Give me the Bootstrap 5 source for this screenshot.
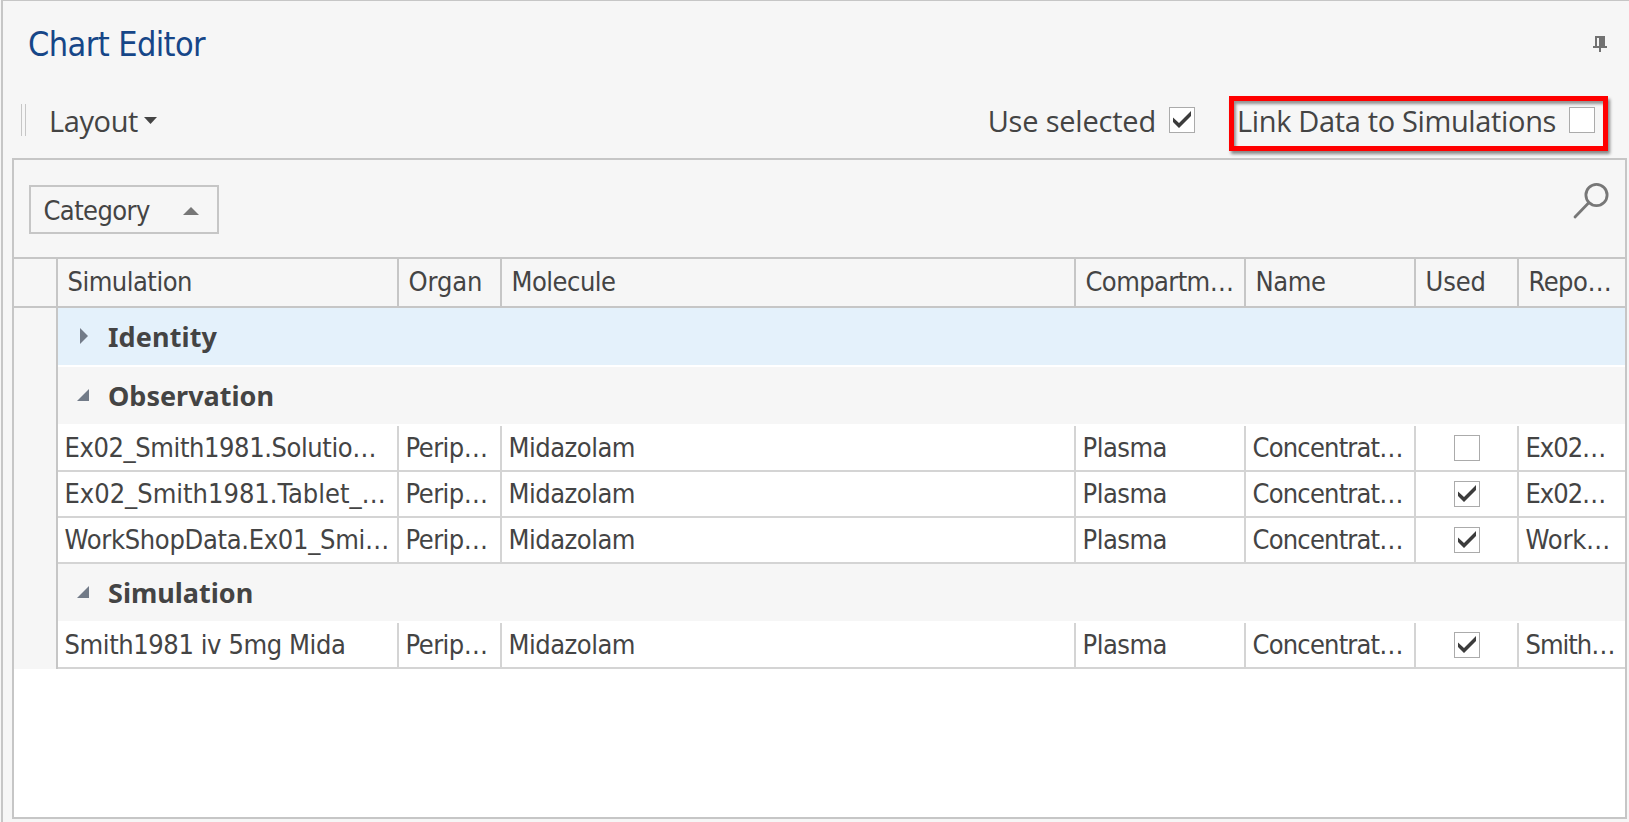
<!DOCTYPE html>
<html lang="en">
<head>
<meta charset="utf-8">
<meta name="viewport" content="width=device-width, initial-scale=1">
<title>Chart Editor</title>
<link href="https://cdn.jsdelivr.net/npm/bootstrap@5.3.0/dist/css/bootstrap.min.css" rel="stylesheet">
<style>
  :root { --line: #c6c6c6; --cell-line: #d4d4d4; --face: #f6f6f6; --ink: #444; }
  body { height: 822px; padding-left: 1px; overflow: hidden; background: var(--face); color: var(--ink);
         font: 27px/1 "DejaVu Sans Condensed", "Liberation Sans", sans-serif; white-space: nowrap; }
  .editor { height: 822px; border-left: 2px solid var(--line); border-top: 1px solid var(--line); padding: 0 2px 3px 9px; }
  .titlebar { height: 86px; padding: 0 20px 0 16px; }
  .titlebar h1 { font-size: 34px; line-height: 86px; color: #164688; letter-spacing: -.6px; }
  .toolbar { height: 71px; font: 29px/68px "Open Sans", "Noto Sans", sans-serif; padding-left: 9px; }
  .grip { width: 5px; height: 32px; margin-top: 17px; border: solid var(--line); border-width: 0 1px; }
  .layout-menu { padding-left: 23px; letter-spacing: -.4px; }
  .layout-menu svg { margin: 30px 0 0 6px; }
  .tick-box { width: 26px; height: 26px; border: 1px solid #ababab; background: #fff; flex: none; }
  .tick-box svg { margin: -1px; }
  .toolbar .tick-box { margin: 20px 0 0 13px; }
  .highlight { width: 379px; height: 55px; margin: 9px 19px 0 34px; border: 5px solid #f00; padding-left: 3px; line-height: 40px;
               box-shadow: 2px 3px 3px rgba(0,0,0,.45), inset 2px 3px 3px rgba(0,0,0,.4); }
  .highlight > :first-child { letter-spacing: -.35px; }
  .toolbar .highlight .tick-box { margin: 6px 0 0 13px; }
  .grid-frame { border: 2px solid var(--line); background: #fff; }
  .group-panel { height: 97px; padding: 23px 16px 0 15px; background: var(--face); }
  .group-chip { width: 190px; height: 49px; margin-top: 2px; border: 2px solid var(--line); padding: 2px 18px 0 12.500px; }
  .table-area { border-top: 2px solid var(--line); }
  .gutter { width: 44px; border-right: 2px solid var(--line); background: var(--face); }
  .gutter div { height: 49px; border-bottom: 2px solid var(--line); margin-right: -2px; }
  .line-row { display: grid; grid-template-columns: 341px 103px 574px 170px 170px 103px 106px; height: 46px;
              line-height: 44px; border-bottom: 2px solid var(--cell-line); }
  .line-row > * { overflow: hidden; padding-left: 6.500px; border-right: 2px solid var(--cell-line); }
  .line-row > :last-child { border-right: 0; }
  .line-row.head { height: 49px; line-height: 45px; background: var(--face); border-color: var(--line); }
  .line-row.head > * { padding-left: 9.500px; border-color: var(--line); }
  .line-row .used { padding: 9px 0 0 38px; }
  .group-line { height: 57px; margin-bottom: 2px; background: var(--face); font: bold 27px/57px "Noto Sans", sans-serif; }
  .group-line svg { margin: 20px 19px 0 19px; width: 12px; height: 16px; flex: none; }
  .group-line.chosen { background: #e4f1fb; }
  .s-10 { letter-spacing: -1px } .s-8 { letter-spacing: -.8px } .s-6 { letter-spacing: -.6px } .s-5 { letter-spacing: -.5px } .s-4 { letter-spacing: -.4px }
  .s-3 { letter-spacing: -.3px } .s-2 { letter-spacing: -.2px } .s-1 { letter-spacing: -.1px } .s1 { letter-spacing: .1px }
</style>
</head>
<body>
<svg class="d-none">
  <symbol id="tick" viewBox="0 0 26 26"><path d="M4 10.5 10 16 22 4v5L10 21 4 15z" fill="#3c3c3c"/></symbol>
  <symbol id="open" viewBox="0 0 12 16"><path d="M12 2v12H0z" fill="#727b88"/></symbol>
  <symbol id="shut" viewBox="0 0 12 16"><path d="M3 0v16l8-8z" fill="#727b88"/></symbol>
</svg>
<main class="editor d-flex flex-column">
  <header class="titlebar d-flex justify-content-between">
    <h1 class="m-0 fw-normal">Chart Editor</h1>
    <svg class="mt-auto mb-auto" width="14" height="16" fill="#727272" shape-rendering="crispEdges"><path d="M2 0h10v10h2v2H8v4H6v-4H0v-2h2zM4 2v8h2V2z" fill-rule="evenodd"/></svg>
  </header>
  <div class="toolbar d-flex">
    <div class="grip"></div>
    <div class="layout-menu d-flex">Layout<svg width="13" height="7"><path d="M0 0h13L6.500 7z" fill="#444"/></svg></div>
    <div class="d-flex ms-auto"><span class="s-2">Use selected</span>
      <span class="tick-box"><svg class="d-block" width="26" height="26"><use href="#tick"/></svg></span></div>
    <div class="highlight d-flex"><span>Link Data to Simulations</span><span class="tick-box"></span></div>
  </div>
  <section class="grid-frame d-flex flex-column flex-grow-1">
    <div class="group-panel d-flex justify-content-between">
      <div class="group-chip d-flex align-items-center justify-content-between"><span class="s-6">Category</span>
        <svg width="16" height="8"><path d="M0 8h16L8 0z" fill="#777"/></svg></div>
      <svg width="36" height="37" fill="none" stroke="#777" stroke-width="2.800" stroke-linecap="round"><circle cx="23.500" cy="12" r="10.600"/><path d="M15.500 20 2 34"/></svg>
    </div>
    <div class="table-area d-flex">
      <div class="gutter"><div></div></div>
      <div class="flex-grow-1">
        <div class="line-row head"><span class="s-5">Simulation</span><span class="s-1">Organ</span><span class="s-5">Molecule</span><span class="s-6">Compartm…</span><span class="s-4">Name</span><span class="s-1">Used</span><span class="s-5">Repo…</span></div>
        <div class="group-line chosen d-flex"><svg><use href="#shut"/></svg><span class="s1">Identity</span></div>
        <div class="group-line d-flex"><svg><use href="#open"/></svg><span>Observation</span></div>
        <div class="line-row"><span class="s-4">Ex02_Smith1981.Solutio…</span><span class="s-5">Perip…</span><span class="s-5">Midazolam</span><span class="s-5">Plasma</span><span class="s-8">Concentrat…</span><div class="used"><div class="tick-box"></div></div><span class="s-10">Ex02…</span></div>
        <div class="line-row"><span>Ex02_Smith1981.Tablet_…</span><span class="s-5">Perip…</span><span class="s-5">Midazolam</span><span class="s-5">Plasma</span><span class="s-8">Concentrat…</span><div class="used"><div class="tick-box"><svg class="d-block" width="26" height="26"><use href="#tick"/></svg></div></div><span class="s-10">Ex02…</span></div>
        <div class="line-row"><span class="s-3">WorkShopData.Ex01_Smi…</span><span class="s-5">Perip…</span><span class="s-5">Midazolam</span><span class="s-5">Plasma</span><span class="s-8">Concentrat…</span><div class="used"><div class="tick-box"><svg class="d-block" width="26" height="26"><use href="#tick"/></svg></div></div><span class="s-2">Work…</span></div>
        <div class="group-line d-flex"><svg><use href="#open"/></svg><span>Simulation</span></div>
        <div class="line-row"><span class="s-4">Smith1981 iv 5mg Mida</span><span class="s-5">Perip…</span><span class="s-5">Midazolam</span><span class="s-5">Plasma</span><span class="s-8">Concentrat…</span><div class="used"><div class="tick-box"><svg class="d-block" width="26" height="26"><use href="#tick"/></svg></div></div><span class="s-10">Smith…</span></div>
      </div>
    </div>
  </section>
</main>
<script src="https://cdn.jsdelivr.net/npm/bootstrap@5.3.0/dist/js/bootstrap.bundle.min.js"></script>
</body>
</html>
